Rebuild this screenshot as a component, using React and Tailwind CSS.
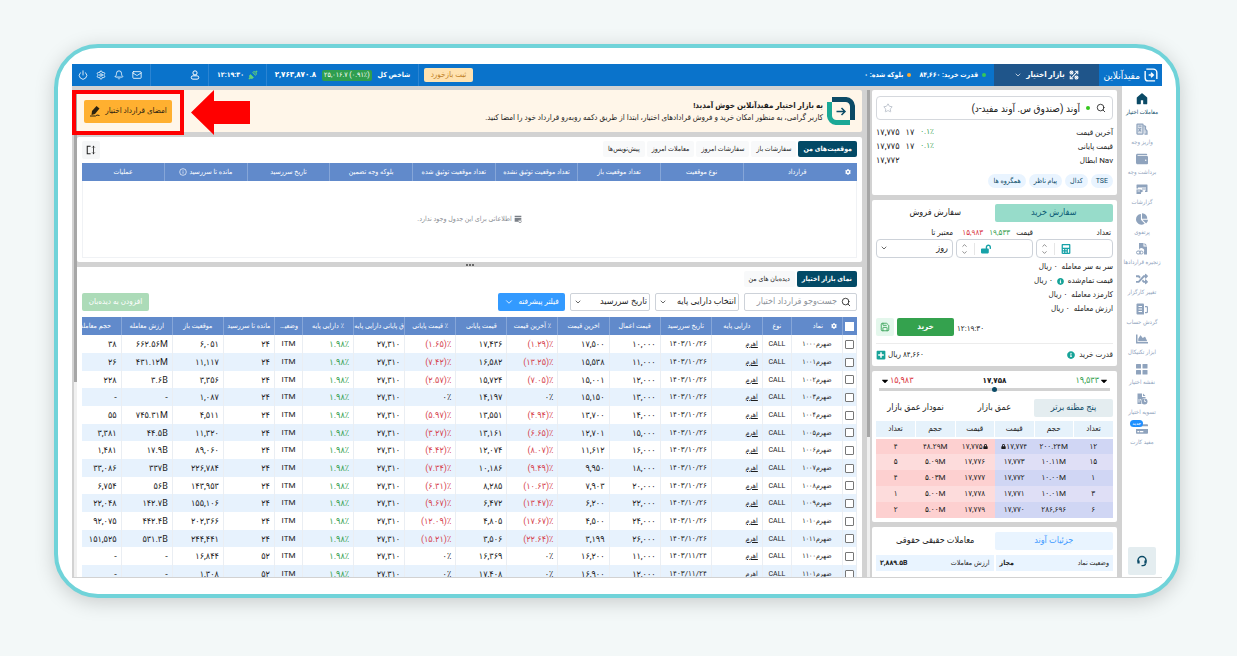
import { useState } from "react";
import { ChevronDown, ChevronUp, Search, Star, Mail, Bell, Settings, Power, Save } from "lucide-react";
import {
  FaWallet, FaChartPie, FaRandom, FaChartArea, FaCreditCard, FaCalculator,
  FaLockOpen, FaInfoCircle, FaPlusSquare, FaCog, FaCaretDown, FaLock,
} from "react-icons/fa";
import { GoHomeFill } from "react-icons/go";

const DepositIcon = () => (
  <svg viewBox="0 0 24 24" className="size-3" fill="none" stroke="currentColor" strokeWidth="2.5">
    <rect x="2" y="2" width="12" height="20" rx="1" fill="currentColor" fillOpacity="0.3" />
    <path d="M5 6h6M5 10l5 7M5 17l5-7" />
    <path d="M15 5l4 2v5l3 4v6h-5" fill="currentColor" fillOpacity="0.5" />
  </svg>
);

const ReportIcon = () => (
  <svg viewBox="0 0 24 24" className="size-3" fill="currentColor">
    <path d="M2 3h20a1 1 0 0 1 1 1v13a1 1 0 0 1-1 1h-4v-3h2v-2h-8v-2h8V9H4v2H1V4a1 1 0 0 1 1-1z" />
    <path d="M1 13h9l5 3-5 3v3H1z" />
    <path d="M3 16h5" stroke="#fff" strokeWidth="1.5" />
  </svg>
);

const ChainIcon = () => (
  <svg viewBox="0 0 24 24" className="size-3" fill="currentColor">
    <path d="M6 0h9v7h7v16h-6v-6a4 4 0 0 0-10-3z" />
    <path d="M17 0l5 5h-5z" />
    <g fill="none" stroke="currentColor" strokeWidth="2">
      <rect x="1" y="16" width="8" height="6" rx="3" />
      <rect x="7" y="16" width="7" height="6" rx="3" />
    </g>
  </svg>
);

const TurnoverIcon = () => (
  <svg viewBox="0 0 24 24" className="size-3" fill="currentColor">
    <path d="M3 1h11a2 2 0 0 1 2 2v20H3a2 2 0 0 1-2-2V3a2 2 0 0 1 2-2z" />
    <path d="M5 7h7M5 12h7M5 17h7" stroke="#fff" strokeWidth="2" />
    <path d="M18 7h3a2 2 0 0 1 2 2v8a2 2 0 0 1-2 2h-3" fill="none" stroke="currentColor" strokeWidth="2.5" />
  </svg>
);

const TilesIcon = () => (
  <svg viewBox="0 0 24 24" className="size-3" fill="currentColor">
    <rect x="0" y="2" width="10" height="9" rx="1" />
    <rect x="13" y="2" width="10" height="9" rx="1" />
    <rect x="0" y="14" width="10" height="9" rx="1" />
    <rect x="13" y="14" width="10" height="9" rx="1" />
  </svg>
);

const SettleIcon = () => (
  <svg viewBox="0 0 24 24" className="size-3" fill="currentColor">
    <path d="M3 1h9v7h7v2a8 8 0 0 0-8 12H3z" />
    <path d="M14 1l5 5h-5z" />
    <circle cx="17" cy="17" r="6" />
    <path d="M17 13v4h3" fill="none" stroke="#fff" strokeWidth="1.5" />
    <path d="M6 12v7M9 12v3" stroke="#fff" strokeWidth="1.5" />
  </svg>
);

const HeadsetIcon = () => (
  <svg viewBox="0 0 24 24" className="size-3" fill="none" stroke="currentColor" strokeWidth="3">
    <path d="M4 13V11a8 8 0 0 1 16 0v2" />
    <path d="M5 11v6M19 11v6" strokeWidth="4.5" />
    <path d="M19 17c0 3-2 4-5 4h-3" strokeWidth="2.5" />
  </svg>
);

const BrandMark = () => (
  <svg viewBox="0 0 24 24" className="size-3.5 shrink-0" fill="none" stroke="#fff" strokeWidth="2.4">
    <path d="M4 2h12a6 6 0 0 1 6 6v11" />
    <path d="M2 5v12a5 5 0 0 0 5 5h12" />
    <path d="M8 12h8M12 8l4 4-4 4" strokeWidth="2.4" />
  </svg>
);

const WelcomeMark = () => (
  <svg viewBox="0 0 28 28" className="size-7 shrink-0" fill="none">
    <path d="M5 2.500h13a7 7 0 0 1 7.500 7.500v13" stroke="#0b4a66" strokeWidth="5" />
    <path d="M2.500 5v13a7 7 0 0 0 7.500 7.500h13" stroke="#1ba896" strokeWidth="5" />
    <path d="M9.500 14.500h8M14.500 11l3.500 3.500-3.500 3.500" stroke="#0b4a66" strokeWidth="1.500" />
  </svg>
);

const MarketIcon = () => (
  <svg viewBox="0 0 24 24" className="size-2.5" fill="none" stroke="currentColor" strokeWidth="2.600">
    <path d="M4 21L20 4M3 3l6 6M15 15l6 6" />
    <circle cx="6" cy="6" r="3.500" />
    <circle cx="18" cy="18" r="3.500" />
    <path d="M14 3h7v7M3 14v7h7" />
  </svg>
);

const SignIcon = () => (
  <svg viewBox="0 0 24 24" className="size-3" fill="#2b2210">
    <path d="M15 2l6 5-9 11-7 2 1-8z" />
    <path d="M2 22h11l3-2 5 1" fill="none" stroke="#2b2210" strokeWidth="2" />
  </svg>
);

const PlugIcon = () => (
  <svg viewBox="0 0 24 24" className="size-2.5" fill="#5fd07a" stroke="#5fd07a" strokeWidth="2">
    <path d="M2 22l4-4M19 5l3-3" strokeWidth="3" />
    <path d="M6 11l7 7c-2 3-6 3-8 1s-2-6 1-8z" />
    <path d="M11 6l7 7c3-2 3-6 1-8s-6-2-8 1z" fillOpacity="0.4" />
  </svg>
);

const UserIcon = () => (
  <svg viewBox="0 0 24 24" className="size-2.5" fill="none" stroke="currentColor" strokeWidth="2.400">
    <circle cx="12" cy="7" r="5" />
    <rect x="3" y="14" width="18" height="8" rx="4" />
  </svg>
);

const ExpandIcon = () => (
  <svg viewBox="0 0 24 24" className="size-2.5" fill="none" stroke="#222" strokeWidth="2.500">
    <path d="M11 3H3v18h8" />
    <path d="M18 2v20M15 6l3-3 3 3M15 18l3 3 3-3" strokeWidth="2" />
  </svg>
);

const sideItems = [
  { label: "معاملات اختیار", icon: <GoHomeFill className="size-3.5" />, active: true },
  { label: "واریز وجه", icon: <DepositIcon /> },
  { label: "برداشت وجه", icon: <FaWallet className="size-3" /> },
  { label: "گزارشات", icon: <ReportIcon /> },
  { label: "پرتفوی", icon: <FaChartPie className="size-3" /> },
  { label: "زنجیره قراردادها", icon: <ChainIcon /> },
  { label: "تغییر کارگزار", icon: <FaRandom className="size-3" /> },
  { label: "گردش حساب", icon: <TurnoverIcon /> },
  { label: "ابزار تکنیکال", icon: <FaChartArea className="size-3" /> },
  { label: "نقشه اختیار", icon: <TilesIcon /> },
  { label: "تسویه اختیار", icon: <SettleIcon /> },
  { label: "مفید کارت", icon: <FaCreditCard className="size-3" />, badge: "جدید" },
];

const positionCols = [
  "نوع موقعیت", "تعداد موقعیت باز", "تعداد موقعیت توثیق نشده", "تعداد موقعیت توثیق شده",
  "بلوکه وجه تضمین", "تاریخ سررسید", "مانده تا سررسید", "عملیات",
];

const marketCols = [
  "دارایی پایه", "تاریخ سررسید", "قیمت اعمال", "اخرین قیمت", "٪ آخرین قیمت", "قیمت پایانی",
  "٪ قیمت پایانی", "ق پایانی دارایی پایه", "٪ دارایی پایه", "وضعیت", "مانده تا سررسید",
  "موقعیت باز", "ارزش معامله", "حجم معامله",
];

// symbol, date, strike, last, last %, close, close %, days left, open positions, value, volume
const contracts = [
  ["ضهرم۱۰۰۰", "۱۴۰۳/۱۰/۲۶", "۱۰,۰۰۰", "۱۷,۵۰۰", "(۱.۲۹)٪", "۱۷,۴۳۶", "(۱.۶۵)٪", "۲۴", "۶,۰۵۱", "۶۶۲.۵۶M", "۳۸"],
  ["ضهرم۱۰۰۱", "۱۴۰۳/۱۰/۲۶", "۱۱,۰۰۰", "۱۵,۵۳۸", "(۱۳.۲۵)٪", "۱۶,۵۸۲", "(۷.۴۲)٪", "۲۴", "۱۱,۱۱۷", "۴۳۱.۱۲M", "۲۶"],
  ["ضهرم۱۰۰۲", "۱۴۰۳/۱۰/۲۶", "۱۲,۰۰۰", "۱۵,۰۰۱", "(۷.۰۵)٪", "۱۵,۷۲۴", "(۲.۵۷)٪", "۲۴", "۳,۳۵۶", "۳.۶B", "۲۲۸"],
  ["ضهرم۱۰۰۳", "۱۴۰۳/۱۰/۲۶", "۱۳,۰۰۰", "۱۵,۱۵۰", "۰٪", "۱۴,۱۹۷", "۰٪", "۲۴", "۱,۰۸۷", "-", "-"],
  ["ضهرم۱۰۰۴", "۱۴۰۳/۱۰/۲۶", "۱۴,۰۰۰", "۱۳,۷۰۰", "(۴.۹۴)٪", "۱۳,۵۵۱", "(۵.۹۷)٪", "۲۴", "۴,۵۱۱", "۷۴۵.۳۱M", "۵۵"],
  ["ضهرم۱۰۰۵", "۱۴۰۳/۱۰/۲۶", "۱۵,۰۰۰", "۱۲,۷۰۱", "(۶.۶۵)٪", "۱۳,۱۶۱", "(۳.۲۷)٪", "۲۴", "۱۱,۳۲۰", "۴۴.۵B", "۳,۳۸۱"],
  ["ضهرم۱۰۰۶", "۱۴۰۳/۱۰/۲۶", "۱۶,۰۰۰", "۱۱,۶۱۲", "(۸.۰۷)٪", "۱۲,۰۷۴", "(۴.۴۲)٪", "۲۴", "۸۹,۰۶۰", "۱۷.۹B", "۱,۴۸۱"],
  ["ضهرم۱۰۰۷", "۱۴۰۳/۱۰/۲۶", "۱۸,۰۰۰", "۹,۹۵۰", "(۹.۴۹)٪", "۱۰,۱۸۶", "(۷.۳۴)٪", "۲۴", "۲۲۶,۷۸۴", "۳۳۷B", "۳۳,۰۸۶"],
  ["ضهرم۱۰۰۸", "۱۴۰۳/۱۰/۲۶", "۲۰,۰۰۰", "۷,۹۰۳", "(۱۰.۶۳)٪", "۸,۲۸۵", "(۶.۳۱)٪", "۲۴", "۱۴۳,۹۵۳", "۵۶B", "۶,۷۵۴"],
  ["ضهرم۱۰۰۹", "۱۴۰۳/۱۰/۲۶", "۲۲,۰۰۰", "۶,۲۰۰", "(۱۳.۴۷)٪", "۶,۴۷۲", "(۹.۶۷)٪", "۲۴", "۱۵۵,۱۰۶", "۱۴۲.۷B", "۲۲,۰۴۸"],
  ["ضهرم۱۰۱۰", "۱۴۰۳/۱۰/۲۶", "۲۴,۰۰۰", "۴,۵۰۰", "(۱۷.۶۷)٪", "۴,۸۰۵", "(۱۲.۰۹)٪", "۲۴", "۲۰۲,۳۶۶", "۴۴۲.۴B", "۹۲,۰۷۵"],
  ["ضهرم۱۰۱۱", "۱۴۰۳/۱۰/۲۶", "۲۶,۰۰۰", "۳,۱۹۹", "(۲۲.۶۴)٪", "۳,۵۰۶", "(۱۵.۲۱)٪", "۲۴", "۲۴۴,۴۴۱", "۵۳۱.۳B", "۱۵۱,۵۲۵"],
  ["ضهرم۱۱۰۰", "۱۴۰۳/۱۱/۲۴", "۱۱,۰۰۰", "۱۶,۲۰۰", "۰٪", "۱۶,۳۶۹", "۰٪", "۵۲", "۱۶,۸۴۴", "-", "-"],
  ["ضهرم۱۱۰۱", "۱۴۰۳/۱۱/۲۴", "۱۲,۰۰۰", "۱۶,۹۰۰", "۰٪", "۱۷,۴۰۸", "۰٪", "۵۲", "۱,۳۰۸", "-", "-"],
];

// bid count, bid volume, bid price, ask price, ask volume, ask count
const depth = [
  ["۱۲", "۲۰۰.۲۴M", "۱۷,۷۷۴", "۱۷,۷۷۵", "۴۸.۲۹M", "۴"],
  ["۱۵", "۱۰.۱۱M", "۱۷,۷۷۳", "۱۷,۷۷۶", "۵.۰۹M", "۵"],
  ["۱", "۱۰.۰۰M", "۱۷,۷۷۲", "۱۷,۷۷۷", "۵.۰۳M", "۴"],
  ["۳", "۱۰.۰۱M", "۱۷,۷۷۱", "۱۷,۷۷۸", "۵.۰۰M", "۱"],
  ["۶", "۲۸۶,۶۹۶", "۱۷,۷۷۰", "۱۷,۷۷۹", "۵.۰۰M", "۲"],
];

const Header = () => (
  <header className="flex h-[22px] shrink-0 items-stretch bg-[#0a73cb] text-[7px] font-bold text-white">
    <div className="flex w-[63px] items-center gap-1 ps-1">
      <BrandMark />
      <span className="whitespace-nowrap text-[10px] font-normal">مفیدآنلاین</span>
    </div>
    <button className="flex w-[105px] items-center justify-center gap-1 bg-[#1f558a] text-[8px]">
      <MarketIcon />
      بازار اختیار
      <ChevronDown className="size-2" />
    </button>
    <div className="flex flex-1 items-center gap-1 whitespace-nowrap ps-2">
      <span className="size-1 rounded-full bg-[#35c759]" />
      <span>قدرت خرید: ۸۴,۶۶۰</span>
      <span className="ms-1 size-1 rounded-full bg-[#ffab2e]" />
      <span>بلوکه شده: ۰</span>
    </div>
    <div className="flex items-center px-[5px]">
      <button className="h-3.5 w-[49px] rounded-xs bg-[#ffe2b0] text-[8px] font-normal text-[#c07f26]">ثبت بازخورد</button>
    </div>
    <div className="flex w-[153px] items-center justify-center gap-1.5 whitespace-nowrap border-x border-[#2b84d2]">
      <span>شاخص کل</span>
      <span dir="ltr" className="rounded-xs bg-[#2f9e4f] px-0.5 py-px font-normal leading-[9px]">۲۵,۰۱۶.۷ (۰.۹۱٪)</span>
      <span className="text-[8px]">۲,۷۶۳,۸۷۰.۸</span>
    </div>
    <div className="flex w-[57px] items-center justify-center gap-1">
      <PlugIcon />
      <span dir="ltr">۱۲:۱۹:۳۰</span>
    </div>
    <div className="flex w-[59px] items-center border-x border-[#2b84d2] ps-2">
      <button aria-label="حساب کاربری"><UserIcon /></button>
    </div>
    <div className="flex w-[78px] items-center gap-2 ps-2">
      <button aria-label="پیام‌ها"><Mail className="size-2.5" /></button>
      <button aria-label="اعلان‌ها"><Bell className="size-2.5" /></button>
      <button aria-label="تنظیمات"><Settings className="size-2.5" /></button>
      <button aria-label="خروج"><Power className="size-2.5" /></button>
    </div>
  </header>
);

const Sidebar = () => (
  <nav className="flex w-10 shrink-0 flex-col items-center bg-white pt-1">
    {sideItems.map((item) => (
      <a
        key={item.label}
        href="#"
        className={`relative flex h-[30px] shrink-0 flex-col items-center gap-0.5 pt-0.5 text-[6px] leading-[8px] ${item.active ? "text-[#0b4a66]" : "text-[#8fa3bd]"}`}
      >
        <span className="flex h-3.5 items-center">{item.icon}</span>
        <span className="whitespace-nowrap">{item.label}</span>
        {item.badge && (
          <span className="absolute top-0 left-0 rounded-full bg-[#1e90ff] px-0.5 text-[5px] leading-[7px] text-white">{item.badge}</span>
        )}
      </a>
    ))}
    <button aria-label="پشتیبانی" className="mt-auto mb-0.5 flex h-7 w-7 shrink-0 items-center justify-center rounded-xs bg-[#e4edf0] text-[#0b4a66]">
      <HeadsetIcon />
    </button>
  </nav>
);

const PriceRow = ({ label, price, change, percent }) => (
  <div className="flex h-3.5 items-center justify-between text-[9px]">
    <span className="text-[8px]">{label}</span>
    <span className="flex gap-1.5" dir="ltr">
      <span>{price}</span>
      {change && <span>{change}</span>}
      {percent && <span className="text-[8px] text-[#35a04f]">{percent}</span>}
    </span>
  </div>
);

const SymbolCard = () => (
  <section className="h-[105px] shrink-0 rounded-xs bg-white px-1 pt-1.5">
    <div className="mb-1.5 flex h-6 items-center gap-1.5 rounded-sm border border-[#d5d8dd] px-1.5">
      <Search className="size-2.5 shrink-0" />
      <span className="size-1 shrink-0 rounded-full bg-[#35c71c]" />
      <input aria-label="نماد" defaultValue="آوند (صندوق س. آوند مفید-د)" className="min-w-0 flex-1 text-[10px] outline-none" />
      <Star className="size-2.5 shrink-0 text-[#b5bcc6]" />
    </div>
    <PriceRow label="آخرین قیمت" price="۱۷,۷۷۵" change="۱۷" percent="۰.۱٪" />
    <PriceRow label="قیمت پایانی" price="۱۷,۷۷۵" change="۱۷" percent="۰.۱٪" />
    <PriceRow label="Nav ابطال" price="۱۷,۷۷۲" />
    <div className="mt-1.5 flex gap-[3px] text-[7px] text-[#0b4a66]">
      {["TSE", "کدال", "پیام ناظر", "همگروه ها"].map((t) => (
        <a key={t} href="#" className="rounded-full bg-[#e9f4ff] px-[5px] leading-[14px]">{t}</a>
      ))}
    </div>
  </section>
);

const Stepper = () => (
  <span className="flex flex-col text-[#444]">
    <ChevronUp className="size-[7px]" />
    <ChevronDown className="size-[7px]" />
  </span>
);

const OrderCard = () => {
  const [count, setCount] = useState("");
  const [price, setPrice] = useState("");

  return (
    <section className="shrink-0 rounded-xs bg-white px-1 pt-1">
      <div className="grid h-[18px] grid-cols-2 text-[9px]">
        <button className="rounded-xs bg-[#97dcca] text-[#0b5a74]">سفارش خرید</button>
        <button>سفارش فروش</button>
      </div>
      <div className="mt-1 grid grid-cols-3 gap-x-[3px] text-[8px]">
        <div>
          <label htmlFor="count" className="block h-[13px] ps-0.5 leading-[13px]">تعداد</label>
          <div className="flex h-[19px] items-center gap-1.5 rounded-sm border border-[#cdd2d9] px-1">
            <input id="count" value={count} onChange={(e) => setCount(e.target.value)} className="min-w-0 flex-1 outline-none" />
            <FaCalculator className="size-2.5 text-[#17a2a8]" />
            <span className="h-3 border-s border-[#e6e6e6]" />
            <Stepper />
          </div>
        </div>
        <div>
          <div className="flex h-[13px] gap-1.5 whitespace-nowrap leading-[13px]">
            <label htmlFor="price">قیمت</label>
            <span className="text-[#35a04f]">۱۹,۵۳۳</span>
            <span className="text-[#d9363e]">۱۵,۹۸۳</span>
          </div>
          <div className="flex h-[19px] items-center gap-1.5 rounded-sm border border-[#cdd2d9] px-1">
            <input id="price" value={price} onChange={(e) => setPrice(e.target.value)} className="min-w-0 flex-1 outline-none" />
            <FaLockOpen className="size-2.5 text-[#17a2a8]" />
            <span className="h-3 border-s border-[#e6e6e6]" />
            <Stepper />
          </div>
        </div>
        <div className="relative">
          <label htmlFor="valid" className="block h-[13px] leading-[13px]">معتبر تا</label>
          <select id="valid" className="block h-[19px] w-full appearance-none rounded-sm border border-[#cdd2d9] ps-1 text-[9px]">
            <option>روز</option>
          </select>
          <ChevronDown className="pointer-events-none absolute bottom-1.5 left-1 size-2" />
        </div>
      </div>
      <div className="mt-0.5 text-[8px] leading-[14px]">
        <p>سر به سر معامله &nbsp;۰ ریال</p>
        <p className="flex items-center gap-1">قیمت تمام‌شده <FaInfoCircle className="size-[7px] text-[#17a398]" /> ۰ ریال</p>
        <p>کارمزد معامله &nbsp;۰ ریال</p>
        <p>ارزش معامله &nbsp;۰ ریال</p>
      </div>
      <div className="mt-0.5 flex items-center justify-end gap-[3px] pb-[7px]">
        <span className="me-px pt-1 text-[8px]" dir="ltr">۱۲:۱۹:۳۰</span>
        <button className="h-[18px] w-[57px] rounded-xs bg-[#34a24e] text-[8px] font-bold text-white">خرید</button>
        <button aria-label="ذخیره" className="flex size-[18px] items-center justify-center rounded-xs bg-[#e4f7ec] text-[#2f9e4f]">
          <Save className="size-2.5" />
        </button>
      </div>
      <div className="flex h-[23px] items-center justify-between border-t border-[#ececec] text-[8px]">
        <span className="flex items-center gap-1">قدرت خرید <FaInfoCircle className="size-2 text-[#17a398]" /></span>
        <span className="flex items-center gap-0.5">۸۴,۶۶۰ ریال <FaPlusSquare className="size-2.5 text-[#17a398]" /></span>
      </div>
    </section>
  );
};

const DepthCard = () => {
  const [price, setPrice] = useState(50);

  return (
    <section className="shrink-0 rounded-xs bg-white px-1 pt-1 pb-1">
      <div className="flex h-3 items-center justify-between px-1 text-[9px]">
        <span className="flex items-center text-[#35a04f]"><FaCaretDown className="size-2.5 text-black" />۱۹,۵۳۳</span>
        <span className="text-[8px] font-bold">۱۷,۷۵۸</span>
        <span className="flex items-center text-[#d9363e]">۱۵,۹۸۳<FaCaretDown className="size-2.5 text-black" /></span>
      </div>
      <input
        type="range"
        aria-label="قیمت"
        value={price}
        onChange={(e) => setPrice(e.target.value)}
        className="mx-[3px] mt-px block h-[3px] w-[calc(100%-6px)] appearance-none bg-[#d2d2d2] [&::-webkit-slider-thumb]:size-[5px] [&::-webkit-slider-thumb]:appearance-none [&::-webkit-slider-thumb]:rounded-full [&::-webkit-slider-thumb]:bg-[#0b4a66]"
      />
      <div className="mt-2 grid h-[18px] grid-cols-3 text-[9px]">
        <button className="rounded-xs bg-[#e4edf0] text-[#0b4a66]">پنج مظنه برتر</button>
        <button>عمق بازار</button>
        <button className="whitespace-nowrap">نمودار عمق بازار</button>
      </div>
      <table className="mt-1 w-full table-fixed text-center text-[8px]">
        <thead>
          <tr className="h-[17px] border-b-2 border-white bg-[#e6f2fb]">
            {["تعداد", "حجم", "قیمت", "قیمت", "حجم", "تعداد"].map((h, i) => (
              <th key={i} className="border-s border-white font-normal first:border-s-0">{h}</th>
            ))}
          </tr>
        </thead>
        <tbody>
          {depth.map((row, r) => (
            <tr key={row[2]} className="group h-4">
              {row.map((cell, i) => (
                <td
                  key={i}
                  dir="ltr"
                  className={i < 3 ? "bg-[#d0d6f4] group-even:bg-[#dfdff6]" : "bg-[#fdd0d0] group-even:bg-[#fddcdc]"}
                >
                  <span className="flex items-center justify-center">
                    {r === 0 && i === 2 && <FaLock className="size-[5px]" />}
                    {cell}
                    {r === 0 && i === 3 && <FaLock className="size-[5px]" />}
                  </span>
                </td>
              ))}
            </tr>
          ))}
        </tbody>
      </table>
    </section>
  );
};

const DetailsCard = () => (
  <section className="shrink-0 rounded-xs bg-white px-1 pt-[5px]">
    <div className="grid h-[18px] grid-cols-2 text-[9px]">
      <button className="rounded-xs bg-[#e9f4ff] text-[#3f9bff]">جزئیات آوند</button>
      <button>معاملات حقیقی حقوقی</button>
    </div>
    <dl className="mt-[5px] grid grid-cols-2 gap-x-0.5 text-[7px]">
      {[["وضعیت نماد", "مجاز"], ["ارزش معاملات", "۲,۸۸۹.۵B"]].map(([k, v]) => (
        <div key={k} className="flex h-4 items-center justify-between bg-[#e9f4ff] px-1">
          <dt>{k}</dt>
          <dd dir="ltr" className="font-bold">{v}</dd>
        </div>
      ))}
    </dl>
    <div className="h-4" />
  </section>
);

const ScrollTrack = ({ size }) => (
  <div className="flex w-[3px] shrink-0 flex-col bg-[#f0f0f0]">
    <div className={`bg-[#a6a6a6] ${size}`} />
  </div>
);

const Banner = () => (
  <section className="flex h-[42px] shrink-0 items-center gap-1 rounded-xs bg-[#fff6e9] px-[7px]">
    <WelcomeMark />
    <div className="flex-1">
      <h1 className="text-[8px] leading-[13px] font-bold">به بازار اختیار مفیدآنلاین خوش آمدید!</h1>
      <p className="text-[8px] leading-[12px]">
        کاربر گرامی، به منظور امکان خرید و فروش قرادادهای اختیار، ابتدا از طریق دکمه روبه‌رو قرارداد خود را امضا کنید.
      </p>
    </div>
    <button className="flex h-[23px] w-[88px] items-center justify-center gap-1 whitespace-nowrap rounded-xs bg-[#ffb030] text-[8px] text-[#2b2210]">
      امضای قرارداد اختیار
      <SignIcon />
    </button>
  </section>
);

const TabBar = ({ tabs }) => (
  <div className="flex gap-0.5 text-[7px]">
    {tabs.map((t, i) => (
      <button
        key={t}
        className={`h-4 whitespace-nowrap rounded-xs px-[5px] ${i === 0 ? "bg-[#034a66] font-bold text-white" : "bg-[#f8f9fa]"}`}
      >
        {t}
      </button>
    ))}
  </div>
);

const PositionsPanel = () => (
  <section className="flex h-[125px] shrink-0 flex-col rounded-xs bg-white px-[5px] pb-1 pt-1">
    <div className="flex h-[22px] shrink-0 items-start justify-between">
      <TabBar tabs={["موقعیت‌های من", "سفارشات باز", "سفارشات امروز", "معاملات امروز", "پیش‌نویس‌ها"]} />
      <button aria-label="تغییر اندازه" className="flex h-[18px] w-[18px] items-center justify-center rounded-xs bg-[#f5f6f7]">
        <ExpandIcon />
      </button>
    </div>
    <table className="w-full table-fixed text-[7px] text-white">
      <thead>
        <tr className="h-[18px] bg-[#618acb]">
          <th className="w-[114px] font-normal">
            <span className="flex items-center px-1.5">
              <FaCog className="size-1.5" />
              <span className="flex-1">قرارداد</span>
            </span>
          </th>
          {positionCols.map((c) => (
            <th key={c} className="whitespace-nowrap border-s border-[#86a6d8] font-normal">
              <span className="flex items-center justify-center gap-0.5">
                {c}
                {c === "مانده تا سررسید" && (
                  <svg viewBox="0 0 24 24" className="size-2" fill="none" stroke="currentColor" strokeWidth="2">
                    <circle cx="12" cy="12" r="10" />
                    <path d="M12 10v7M12 6v2" />
                  </svg>
                )}
              </span>
            </th>
          ))}
        </tr>
      </thead>
    </table>
    <div className="flex flex-1 items-center justify-center gap-0.5 border border-t-0 border-[#f0f2f5] text-[7px] text-[#8b8f95]">
      <svg viewBox="0 0 24 24" className="size-2" fill="#7a7f86">
        <path d="M2 2h20v5H2zM2 9h20v5h-4a5 5 0 0 0-5 6H2z" />
        <circle cx="18" cy="19" r="4" fill="none" stroke="#7a7f86" strokeWidth="2" />
      </svg>
      اطلاعاتی برای این جدول وجود ندارد.
    </div>
  </section>
);

const FilterSelect = ({ label, width }) => (
  <div className={`relative ${width}`}>
    <select aria-label={label} className="block h-[18px] w-full appearance-none rounded-xs border border-[#cdd2d9] ps-0.5 text-[9px]">
      <option>{label}</option>
    </select>
    <ChevronDown className="pointer-events-none absolute top-[5px] left-1 size-2" />
  </div>
);

const tone = (v) => (v.startsWith("(") ? "text-[#d64550]" : "");

const MarketPanel = () => (
  <section className="min-h-0 flex-1 overflow-hidden bg-white px-[5px] pt-1">
    <TabBar tabs={["نمای بازار اختیار", "دیده‌بان های من"]} />
    <div className="mt-1.5 flex gap-[5px]">
      <div className="flex h-[18px] w-[113px] items-center gap-1 rounded-xs border border-[#cdd2d9] px-[5px]">
        <Search className="size-2.5 shrink-0" />
        <input aria-label="جست‌وجو" placeholder="جست‌وجو قرارداد اختیار" className="min-w-0 flex-1 text-[9px] outline-none placeholder:text-[#8f949b]" />
      </div>
      <FilterSelect label="انتخاب دارایی پایه" width="w-[84px]" />
      <FilterSelect label="تاریخ سررسید" width="w-20" />
      <button className="flex h-[18px] w-[67px] items-center justify-center gap-1 whitespace-nowrap rounded-xs bg-[#339aff] text-[8px] text-white">
        فیلتر پیشرفته
        <ChevronDown className="size-2.5" />
      </button>
      <button disabled className="ms-auto h-[18px] w-[67px] whitespace-nowrap rounded-xs bg-[#acdbb8] text-[8px] text-white">
        افزودن به دیده‌بان
      </button>
    </div>
    <div className="mt-1.5 overflow-hidden">
      <table className="w-[calc(100%+12px)] table-fixed text-[9px]">
        <colgroup>
          <col className="w-[14px]" />
          <col className="w-[51px]" />
          <col className="w-[29px]" />
          <col span={9} className="w-[51px]" />
          <col className="w-7" />
          <col span={4} className="w-[51px]" />
        </colgroup>
        <thead>
          <tr className="h-[18px] bg-[#618acb] text-[7px] text-white">
            <th className="p-0">
              <input type="checkbox" aria-label="همه" className="mx-auto block size-[9px] appearance-none bg-white" />
            </th>
            <th className="border-s border-[#86a6d8] font-normal">
              <span className="flex items-center gap-2 ps-[5px]"><FaCog className="size-1.5" />نماد</span>
            </th>
            <th className="border-s border-[#86a6d8] font-normal">نوع</th>
            {marketCols.map((c) => (
              <th key={c} className={`truncate border-s border-[#86a6d8] font-normal ${c === "وضعیت" ? "px-1" : ""}`}>{c}</th>
            ))}
          </tr>
        </thead>
        <tbody className="[&_td]:border-s [&_td]:border-[#eaeef3] [&_td]:whitespace-nowrap [&_td]:leading-[16px]">
          {contracts.map(([symbol, date, strike, last, lastPct, close, closePct, days, open, value, volume]) => (
            <tr key={symbol} className="h-[18px] even:bg-[#e7f2fd] nth-[3n]:h-[17px]">
              <td className="p-0">
                <input type="checkbox" aria-label={symbol} className="mx-auto block size-[9px] appearance-none rounded-[1px] border border-[#777] bg-white" />
              </td>
              <td className="text-center text-[7px]">{symbol}</td>
              <td className="text-center text-[7px]">CALL</td>
              <td className="ps-1 text-[7px]"><a href="#" className="underline">اهرم</a></td>
              <td className="ps-1 text-[8px]">{date}</td>
              <td className="ps-1">{strike}</td>
              <td className="ps-1">{last}</td>
              <td className={`ps-1 ${tone(lastPct)}`}><bdi dir="ltr">{lastPct}</bdi></td>
              <td className="ps-1">{close}</td>
              <td className={`ps-1 ${tone(closePct)}`}><bdi dir="ltr">{closePct}</bdi></td>
              <td className="ps-1">۲۷,۳۱۰</td>
              <td className="ps-1 text-[#35a04f]"><bdi dir="ltr">۱.۹۸٪</bdi></td>
              <td className="text-center text-[8px]">ITM</td>
              <td className="ps-1">{days}</td>
              <td className="ps-1">{open}</td>
              <td className="ps-1"><bdi dir="ltr">{value}</bdi></td>
              <td className="ps-1">{volume}</td>
            </tr>
          ))}
        </tbody>
      </table>
    </div>
  </section>
);

const App = () => {
  return (
    <div className="h-screen bg-[#f3f8f8] pt-11 pr-[57px] pb-[58px] pl-[54px]">
      <div
        dir="rtl"
        className="h-full rounded-[44px] border-4 border-[#70d3d9] bg-white pt-4 pr-3.5 pb-4 pl-3.5 text-[#1d1d1d] shadow-[0_4px_20px_rgba(0,0,0,0.18)] [font-family:Roboto,'DejaVu_Sans_Condensed','DejaVu_Sans',sans-serif]"
      >
        <div className="relative flex h-full flex-col overflow-hidden">
          <Header />
          <div className="flex min-h-0 flex-1 border-b border-[#d2d2d2]">
            <Sidebar />
            <div className="flex min-w-0 flex-1 bg-[#d2d2d2] pt-1 pr-[5px] pl-0.5">
              <aside className="flex w-[245px] shrink-0 flex-col gap-[5px] overflow-hidden">
                <SymbolCard />
                <OrderCard />
                <DepthCard />
                <DetailsCard />
              </aside>
              <div className="flex pr-0.5 pl-[5px]"><ScrollTrack size="h-[347px]" /></div>
              <main className="flex min-w-0 flex-1 flex-col">
                <Banner />
                <div className="h-[5px] shrink-0" />
                <PositionsPanel />
                <div className="flex h-[5px] shrink-0 items-center justify-center gap-px">
                  <span className="size-0.5 rounded-full bg-[#444]" />
                  <span className="size-0.5 rounded-full bg-[#444]" />
                  <span className="size-0.5 rounded-full bg-[#444]" />
                </div>
                <MarketPanel />
              </main>
              <ScrollTrack size="h-[292px]" />
            </div>
          </div>
          <div className="pointer-events-none absolute top-[26px] left-0 flex items-stretch gap-[7px]" dir="ltr">
            <div className="h-[45px] w-28 border-4 border-[#ff0000]" />
            <svg viewBox="0 0 59 45" className="h-[45px] w-[59px]" fill="#ff0000">
              <path d="M0 22.500L23 0v11h36v23H23v11z" />
            </svg>
          </div>
        </div>
      </div>
    </div>
  );
};

export default App;
